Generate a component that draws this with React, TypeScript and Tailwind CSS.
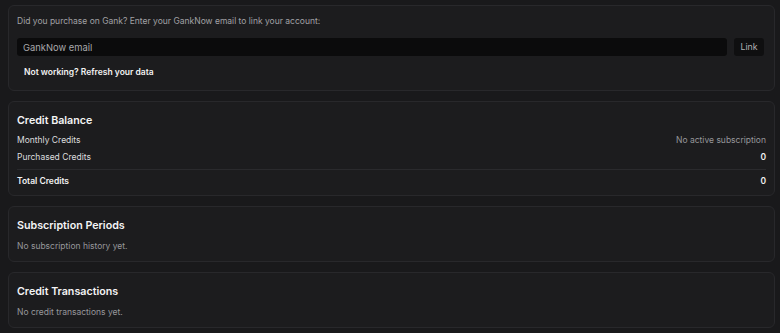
import * as React from "react";

// Account credits panel: GankNow link card + balance + history cards.

const font = { fontFamily: "Inter, 'Noto Sans', sans-serif" };

function Card({ children, className = "" }: { children: React.ReactNode; className?: string }) {
  return (
    <section className={"rounded-md border border-[#28282b] bg-[#1c1c1e] px-2 " + className}>
      {children}
    </section>
  );
}

function EmptyCard({ title, note }: { title: string; note: string }) {
  return (
    <Card className="pt-3 pb-[7px]">
      <h2 className="text-[10.7px] leading-[14px] font-semibold text-[#f4f4f5]">{title}</h2>
      <p className="mt-[5px] text-[8.5px] leading-4 text-[#97979b]">{note}</p>
    </Card>
  );
}

export default function App() {
  const [email, setEmail] = React.useState("");

  return (
    <div style={font} className="min-h-[333px] w-[780px] bg-[#19191b] pl-2 pr-[5px] pt-[5px] flex flex-col gap-[10px] antialiased">
      <Card className="pt-[7px] pb-[10px]">
        <p className="text-[8.5px] leading-4 text-[#a1a1a5]">
          Did you purchase on Gank? Enter your GankNow email to link your account:
        </p>
        <div className="mt-[9px] flex items-center gap-[7px]">
          <input
            value={email}
            onChange={(e) => setEmail(e.target.value)}
            placeholder="GankNow email"
            className="h-[18px] flex-1 rounded-[3px] bg-[#0b0b0c] px-[6px] text-[9.4px] text-[#e5e5e5] placeholder:text-[#a8a8ab] outline-none"
          />
          <button className="mr-[2px] h-[18px] w-[30px] rounded-[3px] bg-[#0f0f10] text-[8.8px] text-[#b0b0b4]">
            Link
          </button>
        </div>
        <button className="mt-[8px] ml-[7px] block text-[8.5px] leading-4 font-semibold text-[#f2f2f2]">
          Not working? Refresh your data
        </button>
      </Card>

      <Card className="pt-3 pb-[6px]">
        <h2 className="text-[10.7px] leading-[14px] font-semibold text-[#f4f4f5]">Credit Balance</h2>
        <div className="mt-1 flex flex-col text-[8.5px]">
          <div className="flex justify-between leading-[17px]">
            <span className="text-[#dcdcdf]">Monthly Credits</span>
            <span className="text-[#97979b]">No active subscription</span>
          </div>
          <div className="flex justify-between leading-[17px]">
            <span className="text-[#dcdcdf]">Purchased Credits</span>
            <span className="font-semibold text-[#f2f2f2]">0</span>
          </div>
          <div className="mt-[3px] border-t border-[#2a2a2d] pt-[3px] flex justify-between leading-4">
            <span className="font-semibold text-[#f2f2f2]">Total Credits</span>
            <span className="font-semibold text-[#f2f2f2]">0</span>
          </div>
        </div>
      </Card>

      <EmptyCard title="Subscription Periods" note="No subscription history yet." />
      <EmptyCard title="Credit Transactions" note="No credit transactions yet." />
    </div>
  );
}
